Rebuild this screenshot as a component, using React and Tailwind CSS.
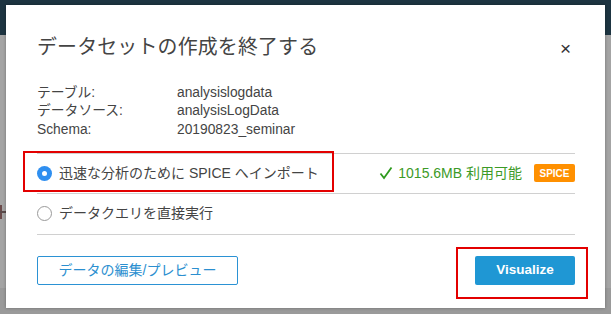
import React from "react";

const font = {
  fontFamily: '"Liberation Sans", "Noto Sans CJK JP", sans-serif',
};

function InfoRow({ label, value }) {
  return (
    <div className="flex h-[18.5px] items-center">
      <div className="w-[140px]">{label}</div>
      <div>{value}</div>
    </div>
  );
}

function Radio({ checked }) {
  return checked ? (
    <span className="flex h-[15px] w-[15px] items-center justify-center rounded-full bg-[#2f8ff0]">
      <span className="h-[5px] w-[5px] rounded-full bg-white" />
    </span>
  ) : (
    <span className="h-[15px] w-[15px] rounded-full border border-[#9a9a9a] bg-white" />
  );
}

export default function App() {
  return (
    <div
      className="relative h-[314px] w-[611px] overflow-hidden bg-[#a4a4a4]"
      style={font}
    >
      <div className="absolute left-0 top-0 h-[35px] w-full bg-[#1d3441]" />
      <div className="absolute left-0 top-[288px] h-[26px] w-full bg-[#9a9a9a]" />
      <div className="absolute left-0 top-[205px] h-[14px] w-[2px] bg-[#6a4a4a]" />
      <div className="absolute left-0 top-[211px] h-[2px] w-[6px] bg-[#5a4a4a]" />

      <div className="relative pl-[6px] pt-[5px]">
        <div className="h-[303px] w-[599px] bg-white pl-[31px] pr-[30px] pt-[32px] text-[13.8px] text-[#444] shadow-[0_0_3px_rgba(0,0,0,0.3)]">
          <div className="flex h-[22px] items-center justify-between">
            <h1 className="text-[19.9px] font-normal tracking-[0.2px] text-[#444]">
              データセットの作成を終了する
            </h1>
            <span className="mr-[4px] text-[19px] leading-none text-[#333]">×</span>
          </div>

          <div className="mt-[25px]">
            <InfoRow label="テーブル:" value="analysislogdata" />
            <InfoRow label="データソース:" value="analysisLogData" />
            <InfoRow label="Schema:" value="20190823_seminar" />
          </div>

          <div className="mt-[13px] border-t border-[#d0d0d0]">
            <div className="relative flex h-[40px] items-center justify-between border-b border-[#d0d0d0]">
              <div className="absolute left-[-14px] top-[-3px] h-[41px] w-[311px] border-2 border-[#e30000]" />
              <div className="flex items-center gap-[7px]">
                <Radio checked />
                <span className="text-[14px]">迅速な分析のために SPICE へインポート</span>
              </div>
              <div className="flex items-center">
                <svg width="16" height="16" viewBox="0 0 16 16" className="mr-[4px]">
                  <path d="M2.5 8.5 L6 13 L13.5 2.5" fill="none" stroke="#2e9a1e" strokeWidth="1.8" />
                </svg>
                <span className="text-[14px] text-[#3c9a27]">1015.6MB 利用可能</span>
                <span className="ml-[12px] flex h-[18px] w-[41px] items-center justify-center rounded-[2px] bg-[#ff9000] text-[10px] font-bold text-white">
                  SPICE
                </span>
              </div>
            </div>
            <div className="flex h-[41px] items-center gap-[7px] border-b border-[#d0d0d0]">
              <Radio />
              <span className="text-[14px]">データクエリを直接実行</span>
            </div>
          </div>

          <div className="mt-[21px] flex items-center justify-between">
            <button className="h-[29px] w-[201px] rounded-[2px] border border-[#2b92d4] bg-white text-[14px] text-[#2b8fd0]">
              データの編集/プレビュー
            </button>
            <div className="relative">
              <div className="absolute left-[-19px] top-[-9px] h-[52px] w-[132px] border-2 border-[#e30000]" />
              <button className="relative h-[29px] w-[100px] rounded-[2px] bg-[#1f97d4] text-[13.5px] font-bold text-white">
                Visualize
              </button>
            </div>
          </div>
        </div>
      </div>
    </div>
  );
}
